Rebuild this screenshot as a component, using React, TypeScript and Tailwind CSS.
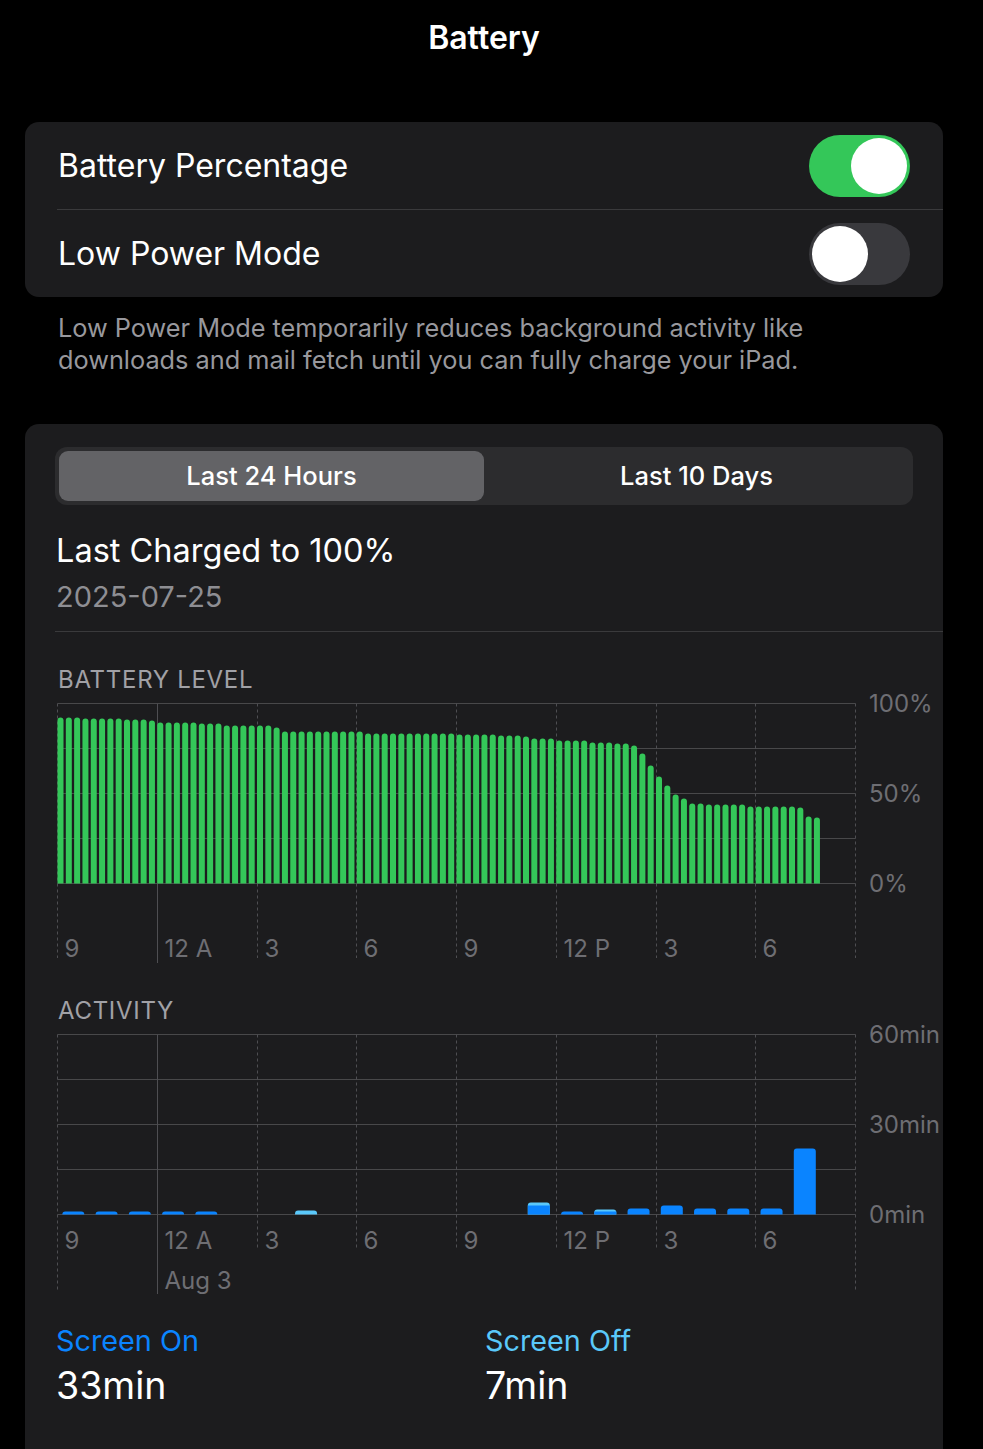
import React from "react";

const rep = (v: number, n: number) => Array.from({ length: n }, () => v);

const batt: number[] = [
  ...rep(166, 3), ...rep(165, 5), ...rep(164, 3), 163, ...rep(161, 5), ...rep(160, 3),
  ...rep(158, 6), 156, ...rep(152, 10), ...rep(150, 11), ...rep(149, 5), ...rep(148, 3),
  147, ...rep(145, 3), ...rep(143, 4), ...rep(141, 3), ...rep(140, 2), 138,
  130, 118, 107, 98, 89, 85, 80, 80, ...rep(79, 5), ...rep(77, 6), 76, 67, 66,
];

const activity: { h: number; on: number; off: number }[] = [
  { h: 0, on: 3, off: 0 },
  { h: 1, on: 3, off: 0 },
  { h: 2, on: 3, off: 0 },
  { h: 3, on: 3, off: 0 },
  { h: 4, on: 3, off: 0 },
  { h: 7, on: 0, off: 4 },
  { h: 14, on: 9, off: 3 },
  { h: 15, on: 3, off: 0 },
  { h: 16, on: 3, off: 2 },
  { h: 17, on: 6, off: 0 },
  { h: 18, on: 9, off: 0 },
  { h: 19, on: 6, off: 0 },
  { h: 20, on: 6, off: 0 },
  { h: 21, on: 6, off: 0 },
  { h: 22, on: 66, off: 0 },
];

const GRID = "#48484a";
const AXIS = "#6e6e73";
const FS = 24;
const vx = Array.from({ length: 9 }, (_, k) => Math.round(32 + 99.75 * k) + 0.5);
const xLabels = ["9", "12 A", "3", "6", "9", "12 P", "3", "6"];
const hy = [9.5, 54.5, 99.5, 144.5, 189.5];

function roundTop(x: number, w: number, top: number, base: number, r: number) {
  const rr = Math.min(r, base - top, w / 2);
  return `M${x},${base} V${top + rr} A${rr} ${rr} 0 0 1 ${x + rr},${top} H${x + w - rr} A${rr} ${rr} 0 0 1 ${x + w},${top + rr} V${base} Z`;
}

function Grid({ dashEnd, edgeEnd, solidEnd }: { dashEnd: number; edgeEnd: number; solidEnd: number }) {
  return (
    <g>
      {hy.map((y) => (
        <line key={y} x1={vx[0]} x2={vx[8]} y1={y} y2={y} stroke={GRID} strokeWidth={1} />
      ))}
      {vx.map((x, k) =>
        k === 1 ? (
          <line key={k} x1={x} x2={x} y1={9.5} y2={solidEnd} stroke="#4e4e52" strokeWidth={1} />
        ) : (
          <line
            key={k}
            x1={x}
            x2={x}
            y1={9.5}
            y2={k === 0 || k === 8 ? edgeEnd : dashEnd}
            stroke="#4e4e52"
            strokeWidth={1}
            strokeDasharray="3 3"
          />
        )
      )}
    </g>
  );
}

function BatteryChart() {
  const base = 189.5;
  return (
    <svg width={918} height={272} className="block">
      <Grid dashEnd={264} edgeEnd={264} solidEnd={269} />
      {batt.map((h, i) => {
        const x = 32.5 + i * 8.3125;
        return <path key={i} d={roundTop(x, 6, base - h, base, 3)} fill="#34c759" />;
      })}
      {xLabels.map((t, k) => (
        <text key={k} x={vx[k] + 7} y={254} dominantBaseline="central" fill={AXIS} fontSize={FS}>
          {t}
        </text>
      ))}
      <text x={844} y={9.5} dominantBaseline="central" fill={AXIS} fontSize={FS}>100%</text>
      <text x={844} y={99.5} dominantBaseline="central" fill={AXIS} fontSize={FS}>50%</text>
      <text x={844} y={189.5} dominantBaseline="central" fill={AXIS} fontSize={FS}>0%</text>
    </svg>
  );
}

function ActivityChart() {
  const base = 189.5;
  return (
    <svg width={918} height={272} className="block">
      <Grid dashEnd={225} edgeEnd={267} solidEnd={269} />
      {activity.map((a) => {
        const x = 37.3 + 33.25 * a.h;
        const total = a.on + a.off;
        return (
          <g key={a.h}>
            {a.off > 0 && <path d={roundTop(x, 22, base - total, base, 3)} fill="#5ac8fa" />}
            {a.on > 0 &&
              (a.off > 0 ? (
                <rect x={x} y={base - a.on} width={22} height={a.on} fill="#0a84ff" />
              ) : (
                <path d={roundTop(x, 22, base - a.on, base, 3)} fill="#0a84ff" />
              ))}
          </g>
        );
      })}
      {xLabels.map((t, k) => (
        <text key={k} x={vx[k] + 7} y={215} dominantBaseline="central" fill={AXIS} fontSize={FS}>
          {t}
        </text>
      ))}
      <text x={vx[1] + 7} y={255} dominantBaseline="central" fill={AXIS} fontSize={FS}>Aug 3</text>
      <text x={844} y={9.5} dominantBaseline="central" fill={AXIS} fontSize={FS}>60min</text>
      <text x={844} y={99.5} dominantBaseline="central" fill={AXIS} fontSize={FS}>30min</text>
      <text x={844} y={189.5} dominantBaseline="central" fill={AXIS} fontSize={FS}>0min</text>
    </svg>
  );
}

function Toggle({ on }: { on: boolean }) {
  return (
    <div
      className={`w-[101px] h-[62px] rounded-full p-[3px] flex ${
        on ? "bg-[#34c759] justify-end" : "bg-[#39393d] justify-start"
      }`}
    >
      <div className="w-[56px] h-[56px] rounded-full bg-white" />
    </div>
  );
}

export default function App() {
  return (
    <div className="h-[1449px] overflow-hidden bg-black font-['Inter','Noto_Sans',sans-serif] text-white">
      <div className="w-[968px]">
        <div className="h-[75px] flex items-center justify-center text-[32px] font-semibold">
          Battery
        </div>

        <div className="mt-[47px] mx-[25px] rounded-[14px] bg-[#1c1c1e]">
          <div className="h-[87px] flex items-center justify-between pl-[33px] pr-[33px]">
            <span className="text-[32px]">Battery Percentage</span>
            <Toggle on />
          </div>
          <div className="ml-[32px] h-px bg-[#3a3a3c]" />
          <div className="h-[87px] flex items-center justify-between pl-[33px] pr-[33px]">
            <span className="text-[32px]">Low Power Mode</span>
            <Toggle on={false} />
          </div>
        </div>

        <div className="px-[58px] pt-[15px] text-[25.3px] leading-[32px] text-[#98989d] whitespace-nowrap">
          Low Power Mode temporarily reduces background activity like
          <br />
          downloads and mail fetch until you can fully charge your iPad.
        </div>

        <div className="mt-[48px] mx-[25px] rounded-t-[14px] bg-[#1c1c1e] pb-[200px]">
          <div className="pt-[23px] px-[30px]">
            <div className="h-[58px] rounded-[12px] bg-[#2c2c2e] p-[4px] grid grid-cols-2">
              <div className="rounded-[9px] bg-[#636366] flex items-center justify-center text-[25.5px] font-medium">
                Last 24 Hours
              </div>
              <div className="flex items-center justify-center text-[25.5px] font-medium">Last 10 Days</div>
            </div>
          </div>

          <div className="mt-[26px] pl-[31px] text-[32.5px] leading-[40px] whitespace-nowrap">Last Charged to 100%</div>
          <div className="mt-[8px] pl-[31px] text-[29px] leading-[36px] text-[#8e8e93]">2025-07-25</div>
          <div className="mt-[16px] ml-[30px] h-px bg-[#3a3a3c]" />

          <div className="mt-[34px] pl-[33px] text-[24px] leading-[28px] tracking-[0.7px] text-[#a1a1a6]">
            BATTERY LEVEL
          </div>
          <BatteryChart />

          <div className="mt-[31px] pl-[33px] text-[24px] leading-[28px] tracking-[0.7px] text-[#a1a1a6]">
            ACTIVITY
          </div>
          <ActivityChart />

          <div className="mt-[26px] flex pl-[31px]">
            <div className="w-[429px]">
              <div className="text-[28.8px] leading-[36px] text-[#0a84ff]">Screen On</div>
              <div className="mt-[4px] text-[37.5px] leading-[46px]">33min</div>
            </div>
            <div>
              <div className="text-[28.8px] leading-[36px] text-[#5ac8fa]">Screen Off</div>
              <div className="mt-[4px] text-[37.5px] leading-[46px]">7min</div>
            </div>
          </div>
        </div>
      </div>
    </div>
  );
}
